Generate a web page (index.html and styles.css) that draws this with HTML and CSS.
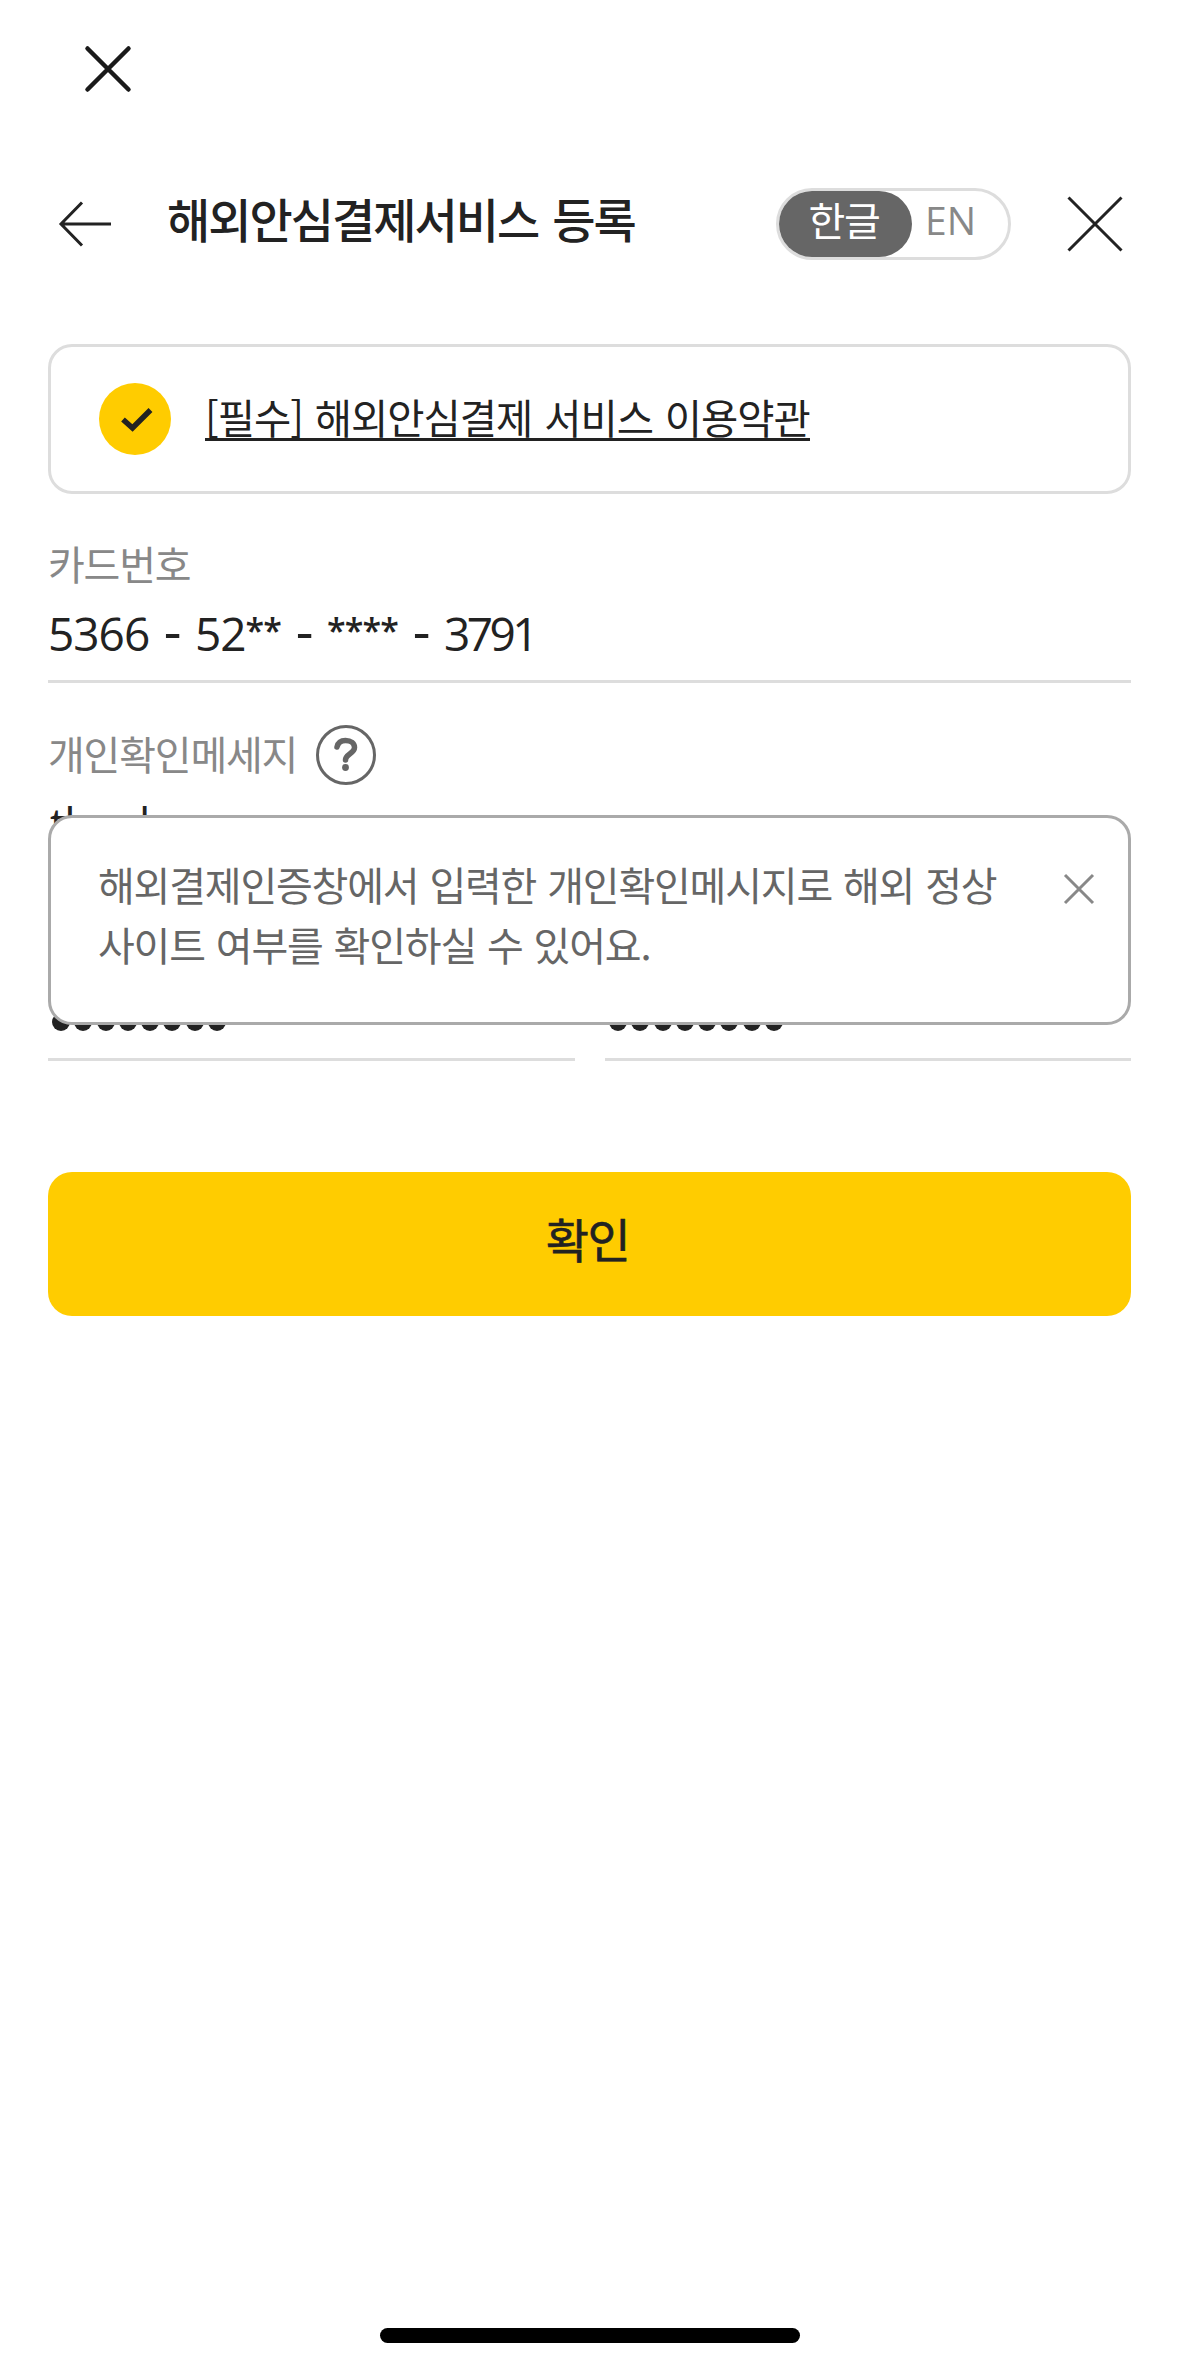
FILE: index.html
```html
<!DOCTYPE html>
<html lang="ko">
<head>
    <meta charset="UTF-8">
    <meta name="viewport" content="width=device-width, initial-scale=1.0">
    <title>해외안심결제서비스 등록</title>
    <link rel="stylesheet" href="styles.css">
</head>
<body>
    <div class="app-bar">
        <svg class="app-close" viewBox="0 0 48 48"><path d="M3.5 3.5 44.500 44.500M44.500 3.500 3.500 44.500"/></svg>
    </div>

    <header class="header">
        <svg class="back" viewBox="0 0 54 48"><path d="M24 2.500 3 24 24 45.500M3 24H53"/></svg>
        <h1 class="title">해외안심결제서비스 등록</h1>
        <div class="lang">
            <span class="lang-item active">한글</span>
            <span class="lang-item en">EN</span>
        </div>
        <svg class="close" viewBox="0 0 56 56"><path d="M1.500 1.500 54.500 54.500M54.500 1.500 1.500 54.500"/></svg>
    </header>

    <main class="content">
        <div class="terms">
            <svg class="check" viewBox="0 0 72 72">
                <circle cx="36" cy="36" r="36"/>
                <path d="M24 36.500 33.500 45 51.500 27"/>
            </svg>
            <a class="terms-link">[필수] 해외안심결제 서비스 이용약관</a>
        </div>

        <div class="field card-field">
            <div class="label">카드번호</div>
            <div class="card-number">
                <span>5366</span><span class="dash">-</span>
                <span>52<span class="mask">**</span></span><span class="dash">-</span>
                <span class="mask">****</span><span class="dash">-</span>
                <span class="last">3791</span>
            </div>
        </div>

        <div class="message-field">
            <div class="label">개인확인메세지
                <svg class="help" viewBox="0 0 60 60">
                    <circle cx="30" cy="30" r="28.500"/>
                    <path d="M21 22C22 17.500 25 15.500 29.500 15.500C35 15.500 38.500 18.500 38.500 22.500C38.500 28.500 29.500 29 29.500 35"/>
                    <circle class="dot" cx="29.500" cy="42.500" r="3.400"/>
                </svg>
            </div>
            <div class="message">thank you</div>
            <div class="tooltip">
                <p>해외결제인증창에서 입력한 개인확인메시지로 해외 정상<br>사이트 여부를 확인하실 수 있어요.</p>
                <svg class="tooltip-close" viewBox="0 0 32 32"><path d="M2 2 30 30M30 2 2 30"/></svg>
            </div>
        </div>

        <div class="passwords">
            <div class="password"><i></i><i></i><i></i><i></i><i></i><i></i><i></i><i></i></div>
            <div class="password"><i></i><i></i><i></i><i></i><i></i><i></i><i></i><i></i></div>
        </div>

        <button class="submit">확인</button>
    </main>

    <div class="home-bar"></div>
</body>
</html>
```

FILE: styles.css
```css
* {
    box-sizing: border-box;
}
body {
    margin: 0;
    height: 2367px;
    display: flex;
    flex-direction: column;
    background: #fff;
    color: #222;
    font-family: "Noto Sans CJK KR", sans-serif;
    font-size: 40px;
    letter-spacing: -1.2px;
    word-spacing: 1px;
}
svg {
    display: block;
    flex: none;
    fill: none;
    stroke: #222;
    stroke-width: 3;
}
.app-bar {
    height: 138px;
    padding: 45px 84px;
}
.app-close {
    width: 48px;
    height: 48px;
    stroke: #1a1a1a;
    stroke-width: 4.5;
    stroke-linecap: round;
}
.header {
    height: 172px;
    display: flex;
    align-items: center;
    padding: 0 56px 0 58px;
}
.back {
    width: 54px;
    height: 48px;
}
.title {
    flex: 1;
    margin: -12px 0 0 55px;
    font-size: 47px;
    font-weight: 500;
    letter-spacing: -2px;
    word-spacing: 3px;
    line-height: 60px;
    white-space: nowrap;
}
.lang {
    width: 235px;
    height: 72px;
    display: flex;
    border: 3px solid #ddd;
    border-radius: 36px;
    color: #888;
}
.lang-item {
    line-height: 57px;
    text-align: center;
}
.lang-item.active {
    width: 133px;
    height: 66px;
    padding-right: 3px;
    border-radius: 33px;
    background: #666;
    color: #fff;
}
.lang-item.en {
    padding-left: 13px;
    font-family: "Open Sans", sans-serif;
    font-size: 39px;
    letter-spacing: 0;
}
.close {
    width: 56px;
    height: 56px;
    margin-left: 56px;
}
.content {
    padding: 34px 48px 0;
}
.terms {
    height: 150px;
    display: flex;
    align-items: center;
    gap: 34px;
    padding-left: 48px;
    border: 3px solid #ddd;
    border-radius: 24px;
}
.check {
    width: 72px;
    height: 72px;
    stroke: none;
    fill: #fc0;
}
.check path {
    fill: none;
    stroke: #222;
    stroke-width: 5.5;
}
.terms-link {
    height: 49px;
    margin-top: -6px;
    border-bottom: 3px solid #222;
    font-size: 40.5px;
    letter-spacing: -1px;
    word-spacing: 1.5px;
    line-height: 50px;
    white-space: nowrap;
}
.label {
    display: flex;
    align-items: center;
    gap: 19px;
    height: 60px;
    color: #888;
    line-height: 60px;
}
.card-field {
    height: 189px;
    padding-top: 39px;
    border-bottom: 3px solid #ddd;
}
.card-number {
    display: flex;
    align-items: baseline;
    height: 60px;
    margin-top: 7px;
    font-family: "Open Sans", sans-serif;
    font-size: 46px;
    line-height: 60px;
    letter-spacing: -1px;
    word-spacing: 0;
}
.dash {
    margin: 0 14.5px;
    font-size: 55px;
}
.mask {
    position: relative;
    top: -8px;
    font-size: 34px;
    font-weight: 600;
    letter-spacing: -0.8px;
}
.last {
    letter-spacing: -3.5px;
}
.message-field {
    position: relative;
    height: 316px;
    padding-top: 40px;
}
.help {
    width: 60px;
    height: 60px;
    margin-top: 4px;
    stroke: #666;
}
.help path {
    stroke-width: 5.5;
    stroke-linecap: round;
}
.help .dot {
    fill: #666;
    stroke: none;
}
.message {
    padding-left: 2px;
    font-family: "Open Sans", sans-serif;
    font-size: 45px;
    letter-spacing: -1.8px;
    line-height: 82px;
}
.tooltip {
    position: absolute;
    z-index: 1;
    top: 132px;
    left: 0;
    width: 100%;
    height: 210px;
    display: flex;
    justify-content: space-between;
    padding: 36px 33px 0 47px;
    border: 3px solid #aaa;
    border-radius: 24px;
    background: #fff;
    color: #666;
}
.tooltip p {
    margin: 0;
    line-height: 60px;
    white-space: nowrap;
}
.tooltip-close {
    width: 32px;
    height: 32px;
    margin-top: 19px;
    stroke: #888;
}
.passwords {
    display: grid;
    grid-template-columns: 527px 526px;
    gap: 30px;
}
.password {
    height: 62px;
    display: flex;
    gap: 4.3px;
    padding: 14px 0 0 4px;
    border-bottom: 3px solid #ddd;
}
.password i {
    width: 18px;
    height: 18px;
    border-radius: 50%;
    background: #222;
}
.submit {
    display: block;
    width: 100%;
    height: 144px;
    margin-top: 111px;
    padding: 0 4px 13px 0;
    border: 0;
    border-radius: 24px;
    background: #fc0;
    color: #222;
    font: 400 47px "Noto Sans CJK KR", sans-serif;
    letter-spacing: -1.5px;
    -webkit-text-stroke: 0.6px #222;
}
.home-bar {
    width: 420px;
    height: 15px;
    margin: auto auto 24px 380px;
    border-radius: 8px;
    background: #000;
}
```
